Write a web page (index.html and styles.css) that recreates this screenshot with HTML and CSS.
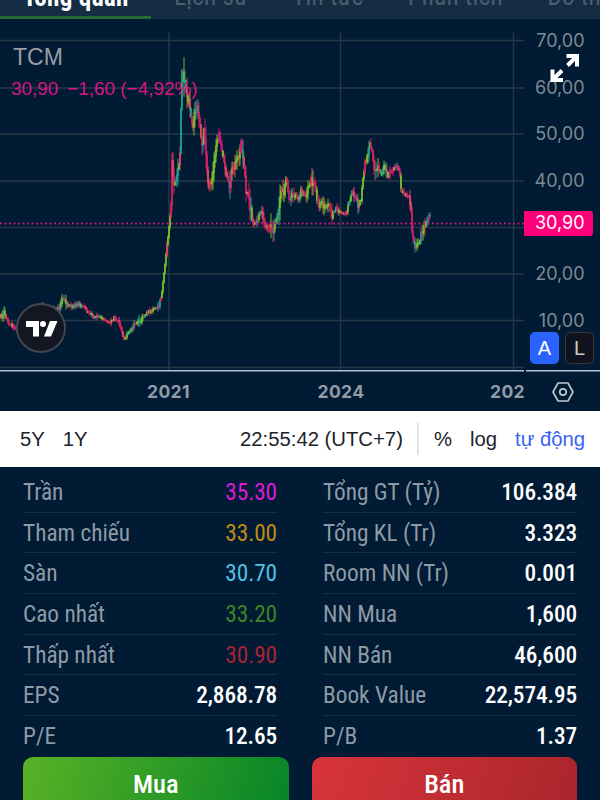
FILE: index.html
```html
<!DOCTYPE html>
<html lang="vi">
  <head>
    <meta charset="UTF-8" />
    <meta name="viewport" content="width=device-width, initial-scale=1.0" />
    <title>TCM</title>
    <link rel="stylesheet" href="styles.css">
    <script defer src="chart.js"></script>
  </head>
  <body>
    <nav class="tabs">
      <a class="tab active"><span>Tổng quan</span></a>
      <a class="tab"><span>Lịch sử</span></a>
      <a class="tab"><span>Tin tức</span></a>
      <a class="tab"><span>Phân tích</span></a>
      <a class="tab"><span>Đồ thị</span></a>
    </nav>

    <section class="chart">
      <svg class="plot" id="plot" width="600" height="353" viewBox="0 19 600 353">
        <path class="grid" d="M0 40.5H524M0 88H524M0 134H524M0 181H524M0 227.5H524M0 274H524M0 320.5H524M0 367.5H524M169 32V370M340.5 32V370M513.5 32V370" />
        <g id="candles"></g>
        <path class="last-price" d="M0 223.5H524" />
        <path class="axis-line" d="M0 370.7H524M526 370.7H600" />
        <g class="scale">
          <text x="584.5" y="46.500">70,00</text>
          <text x="584.5" y="93.500">60,00</text>
          <text x="584.5" y="139.500">50,00</text>
          <text x="584.5" y="186.500">40,00</text>
          <text x="584.5" y="279.500">20,00</text>
          <text x="584.5" y="326.500">10,00</text>
        </g>
      </svg>
      <div class="legend">
        <div class="symbol">TCM</div>
        <div class="change"><span>30,90</span><span>−1,60 (−4,92%)</span></div>
      </div>
      <svg class="expand" width="30" height="30" viewBox="0 0 30 30">
        <path d="M16.500 3H27V13.500M26.500 3.500L17.500 12.500M2.500 16.500V27H13M3 26.500L12 17.500" />
      </svg>
      <span class="price-tag">30,90</span>
      <div class="scale-buttons">
        <button class="auto">A</button>
        <button class="log">L</button>
      </div>
      <svg class="logo" width="50" height="50" viewBox="0 0 50 50">
        <circle class="logo-ring" cx="25" cy="25" r="24" />
        <path d="M10 18H23V33.500H17V24H10Z" />
        <circle cx="27" cy="21" r="3" />
        <path d="M34 18H41.500L35 33.500H28Z" />
      </svg>
    </section>

    <div class="time-axis">
      <span>2021</span>
      <span>2024</span>
      <span class="cut">202</span>
      <svg width="24" height="22" viewBox="0 0 24 22">
        <path d="M7 2H17L22 11L17 20H7L2 11Z" />
        <circle cx="12" cy="11" r="3.200" />
      </svg>
    </div>

    <div class="toolbar">
      <span class="range">5Y</span>
      <span class="range">1Y</span>
      <span class="clock">22:55:42 (UTC+7)</span>
      <span class="percent">%</span>
      <span class="log-mode">log</span>
      <span class="auto-mode">tự động</span>
    </div>

    <main class="stats">
      <dl>
        <div><dt>Trần</dt><dd class="ceiling">35.30</dd></div>
        <div><dt>Tham chiếu</dt><dd class="reference">33.00</dd></div>
        <div><dt>Sàn</dt><dd class="floor">30.70</dd></div>
        <div><dt>Cao nhất</dt><dd class="high">33.20</dd></div>
        <div><dt>Thấp nhất</dt><dd class="low">30.90</dd></div>
        <div><dt>EPS</dt><dd>2,868.78</dd></div>
        <div><dt>P/E</dt><dd>12.65</dd></div>
      </dl>
      <dl>
        <div><dt>Tổng GT (Tỷ)</dt><dd>106.384</dd></div>
        <div><dt>Tổng KL (Tr)</dt><dd>3.323</dd></div>
        <div><dt>Room NN (Tr)</dt><dd>0.001</dd></div>
        <div><dt>NN Mua</dt><dd>1,600</dd></div>
        <div><dt>NN Bán</dt><dd>46,600</dd></div>
        <div><dt>Book Value</dt><dd>22,574.95</dd></div>
        <div><dt>P/B</dt><dd>1.37</dd></div>
      </dl>
    </main>

    <footer class="actions">
      <button class="buy">Mua</button>
      <button class="sell">Bán</button>
    </footer>
  </body>
</html>
```
FILE: styles.css
```css
* { box-sizing: border-box; }
body { margin: 0; height: 800px; overflow: hidden; background: #001b33; color: #fff; font-family: "Liberation Sans", Arial, sans-serif; }
button { border: none; padding: 0; color: white; font-family: inherit; }

.tabs { display: flex; height: 19px; background: #152d43; overflow: hidden; font-family: "Roboto Condensed", Roboto, sans-serif; font-stretch: 75%; font-size: 25px; letter-spacing: 0.3px; color: #4a5f71; white-space: nowrap; }
.tab { flex: none; display: flex; align-items: flex-end; height: 19px; padding: 0 21px 13px 23px; line-height: 18px; }
.tab.active { color: #fff; font-weight: bold; border-bottom: 3px solid #236a35; padding-bottom: 9px; width: 151px; }

.chart { position: relative; height: 353px; }
.plot { display: block; }
.grid { stroke: #263846; stroke-width: 1.4; fill: none; }
.last-price { stroke: #b51b7b; stroke-width: 1.8; stroke-dasharray: 2 2.5; }
.axis-line { stroke: #b5bfd2; stroke-width: 1.6; }
.scale { fill: #7f8992; font: 18px Inter, sans-serif; text-anchor: end; }
.legend { position: absolute; left: 11px; top: 25px; }
.symbol { font-size: 23px; line-height: 26px; color: #999da3; padding-left: 2px; }
.change { display: flex; gap: 9px; margin-top: 8px; font-size: 18.9px; line-height: 22px; color: #d91682; }
.expand { position: absolute; left: 550px; top: 34px; fill: none; stroke: #fff; stroke-width: 4; }
.price-tag { position: absolute; left: 524px; top: 192px; width: 69px; height: 25px; border-radius: 0 3px 3px 0; background: #ff007a; font: 18px/24px Inter, sans-serif; padding-left: 11px; }
.scale-buttons { position: absolute; left: 530px; top: 313px; display: flex; gap: 6px; }
.scale-buttons button { width: 29px; height: 32px; border-radius: 5px; font-size: 20px; background: #2962ff; }
.scale-buttons .log { background: #10131e; border: 1.5px solid #353740; color: #ccc; }
.logo { position: absolute; left: 16px; top: 284px; fill: #fff; }
.logo .logo-ring { fill: #131722; stroke: #424651; stroke-width: 2; }

.time-axis { display: grid; grid-template-columns: 82px 173px 172px 98px 75px; align-items: center; height: 39px; font: bold 17.5px Inter, sans-serif; letter-spacing: 0.4px; color: #929ba6; }
.time-axis span { text-align: center; }
.time-axis span:first-child { grid-column: 2; }
.time-axis .cut { text-align: right; }
.time-axis svg { justify-self: center; fill: none; stroke: #c0c8d0; stroke-width: 1.7; }

.toolbar { display: flex; align-items: center; height: 56px; padding: 0 15px 0 20px; background: #fff; color: #20232b; font-size: 20.3px; white-space: nowrap; }
.range { margin-right: 18px; }
.clock { margin-left: auto; padding-right: 14px; line-height: 32px; border-right: 2px solid #e0e3eb; }
.percent { margin: 0 18px 0 15px; }
.auto-mode { margin-left: 18px; color: #3764ef; }

.stats { display: grid; grid-template-columns: 254px 254px; gap: 46px; padding: 5px 23px 0; height: 290px; font-family: "Roboto Condensed", Roboto, sans-serif; font-stretch: 75%; font-size: 23.3px; }
dl { margin: 0; }
dl div { display: flex; justify-content: space-between; height: 40.700px; border-bottom: 1.5px solid #132e45; line-height: 41px; }
dl div:last-child { border: none; }
dt { color: #8e9aa6; }
dd { margin: 0; font-weight: 500; letter-spacing: -0.1px; }
.ceiling, .reference, .floor, .high, .low { font-weight: 400; }
.ceiling { color: #dc1bd9; }
.reference { color: #bd8b16; }
.floor { color: #54bfe2; }
.high { color: #3f8421; }
.low { color: #a72435; }

.actions { display: flex; gap: 23px; padding: 0 23px; }
.actions button { flex: 1; height: 54px; padding-bottom: 2px; border-radius: 10px 10px 0 0; font-family: "Roboto Condensed", Roboto, sans-serif; font-stretch: 75%; font-size: 26.5px; font-weight: 500; }
.buy { background: linear-gradient(110deg, #5ab225, #058528); }
.sell { background: linear-gradient(110deg, #d8343b, #aa252c); }
```
FILE: chart.js
```javascript
// [x, y, wick size] along the price curve
const points = [
  [0, 318, 4], [4, 313, 5], [8, 322, 4], [15, 328, 3], [24, 322, 3], [34, 313, 4],
  [42, 306, 4], [50, 311, 3], [59, 308, 3], [63, 297, 4], [67, 304, 5], [71, 307, 4],
  [77, 304, 3], [83, 306, 3], [88, 312, 3], [93, 317, 3], [97, 315, 3], [102, 318, 2],
  [110, 323, 2], [115, 317, 3], [120, 325, 4], [124, 339, 2], [129, 332, 3], [135, 323, 3],
  [141, 320, 4], [147, 312, 3], [153, 310, 3], [159, 306, 3], [162, 291, 3], [164, 273, 3],
  [167, 245, 3], [169, 228, 4], [171, 204, 3], [172, 160, 10], [174, 183, 8], [178, 173, 10],
  [180, 155, 7], [181, 110, 4], [182, 72, 4], [185, 83, 14], [188, 99, 10], [190, 108, 9],
  [193, 125, 10], [196, 106, 9], [199, 115, 8], [202, 145, 8], [204, 133, 15], [206, 152, 10],
  [208, 185, 8], [211, 184, 6], [213, 169, 8], [216, 149, 9], [219, 133, 10], [221, 147, 8],
  [223, 158, 9], [225, 171, 7], [228, 181, 4], [230, 190, 9], [231, 173, 6], [235, 166, 8],
  [238, 158, 7], [241, 142, 12], [243, 162, 11], [246, 189, 12], [249, 198, 10], [252, 216, 12],
  [254, 226, 9], [258, 221, 5], [261, 210, 5], [265, 226, 7], [269, 229, 6], [274, 229, 9],
  [278, 212, 5], [281, 193, 11], [284, 191, 8], [286, 175, 10], [289, 198, 9], [293, 195, 5],
  [298, 199, 6], [301, 191, 5], [306, 197, 4], [310, 181, 7], [313, 182, 8], [316, 192, 6],
  [319, 207, 7], [322, 202, 6], [325, 208, 7], [329, 206, 5], [332, 215, 8], [336, 208, 4],
  [340, 213, 4], [345, 214, 2], [348, 207, 4], [352, 193, 4], [356, 196, 5], [358, 207, 6],
  [361, 199, 5], [363, 176, 8], [365, 162, 8], [368, 158, 7], [370, 143, 7], [373, 160, 9],
  [375, 172, 9], [378, 165, 7], [381, 173, 4], [384, 168, 6], [388, 175, 5], [393, 169, 6],
  [396, 165, 4], [399, 169, 4], [401, 190, 7], [405, 195, 3], [409, 196, 4], [411, 211, 5],
  [412, 230, 4], [413, 240, 6], [415, 248, 5], [419, 242, 4], [422, 231, 7], [425, 226, 7],
  [427, 219, 5], [430, 216, 4]
];

const group = document.getElementById('candles');
const up = ['#78c52d', '#20a894', '#84c42e'];
const down = ['#e2215f', '#f04c68', '#cb1a78'];
let seed = 11;

function random() {
  seed = (seed * 16807) % 2147483647;
  return seed / 2147483647;
}

function bar(x, y1, y2, width, color) {
  const line = document.createElementNS('http://www.w3.org/2000/svg', 'line');
  line.setAttribute('x1', x);
  line.setAttribute('x2', x);
  line.setAttribute('y1', y1);
  line.setAttribute('y2', y2);
  line.setAttribute('stroke-width', width);
  line.setAttribute('stroke', color);
  group.appendChild(line);
}

let last = points[0][1];
for (let i = 1; i < points.length; i++) {
  const [x0, y0] = points[i - 1];
  const [x1, y1, wick] = points[i];
  for (let x = x0 + 1; x <= x1; x++) {
    const base = y0 + (y1 - y0) * (x - x0) / (x1 - x0);
    const next = base + (random() - 0.5) * wick;
    const rising = random() < 0.2 ? next > last : next < last;
    const color = (rising ? up : down)[Math.floor(random() * 3)];
    const spread = wick * random() * 1.3;
    bar(x, Math.min(last, next) - spread, Math.max(last, next) + spread, 0.9, color);
    bar(x, Math.min(last, next) - 0.6, Math.max(last, next) + 0.6, 1.6, color);
    last = next;
  }
}
```
